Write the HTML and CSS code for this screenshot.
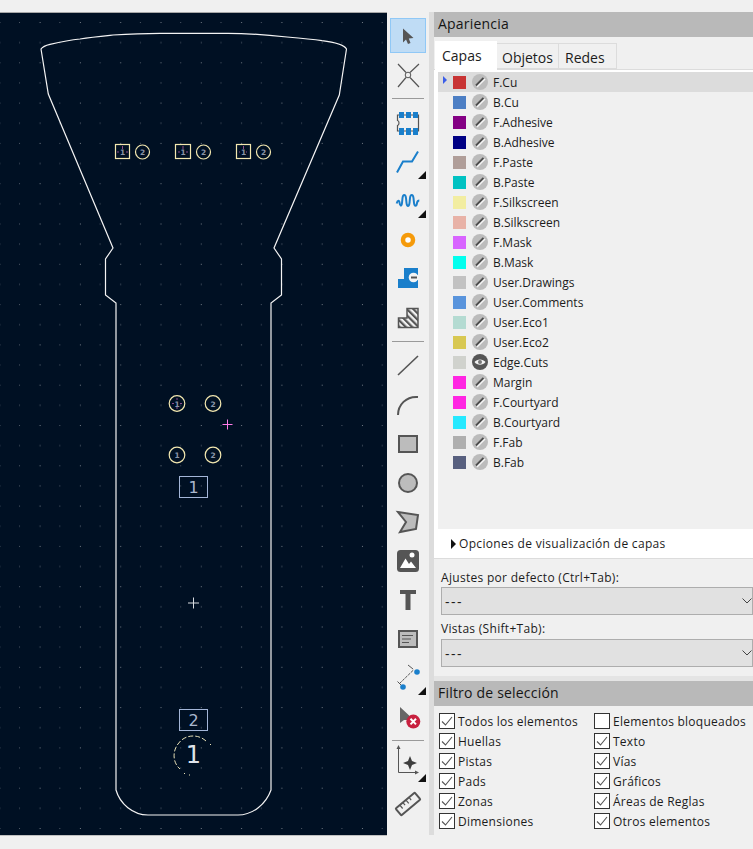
FILE: index.html
```html
<!DOCTYPE html>
<html lang="es">
<head>
<meta charset="utf-8">
<title>Apariencia</title>
<link rel="stylesheet" href="styles.css">
</head>
<body>
<svg class="defs" width="0" height="0">
  <symbol id="off" viewBox="0 0 16 16">
    <circle cx="8" cy="8" r="8" fill="#bcbcbc"/>
    <path d="M4 11.500 11.500 4" stroke="#4e4e4e" stroke-width="1.900"/>
    <path d="M5 13 13 5" stroke="#f4f4f4" stroke-width="1.400"/>
  </symbol>
  <symbol id="eye" viewBox="0 0 16 16">
    <circle cx="8" cy="8" r="8" fill="#555"/>
    <path d="M2.500 8C5 4.500 11 4.500 13.500 8 11 11.500 5 11.500 2.500 8Z" fill="#f2f2f2"/>
    <circle cx="8" cy="8" r="2" fill="#777"/>
  </symbol>
  <symbol id="tick" viewBox="0 0 14 14">
    <path d="M2 7.500 5.500 11 12 3" fill="none" stroke="#555" stroke-width="1.100"/>
  </symbol>
  <symbol id="chev" viewBox="0 0 10 6">
    <path d="M.5.5 5 5 9.500.5" fill="none" stroke="#444" stroke-width="1"/>
  </symbol>
  <pattern id="grid" x="19" y="22" width="40.300" height="40.300" patternUnits="userSpaceOnUse">
    <rect x="0" y="0" width="1" height="1" fill="#4d5765"/>
    <rect x="20.600" y="0" width="1" height="1" fill="#727a85"/>
    <rect x="0" y="20.100" width="1" height="1" fill="#4d5765"/>
    <rect x="20.600" y="20.100" width="1" height="1" fill="#5f6875"/>
  </pattern>
  <pattern id="hatch" width="4.500" height="4.500" patternUnits="userSpaceOnUse" patternTransform="rotate(-45)">
    <rect width="2.200" height="4.500" fill="#555"/>
  </pattern>
</svg>
<div class="top-strip"></div>
<div class="main">
  <div class="canvas">
    <svg class="board" viewBox="0 13 386 822" width="386" height="822">
      <rect x="0" y="13" width="386" height="822" fill="url(#grid)"/>
      <path class="edge" d="M41 49C43 46 47 45 50 44.300 60 42 70 40 80 39 92 37 103 36 113 35 128 34 145 33.300 160 33.300H228C248 33.300 268 35 287 37 299 38 311 39 322 40.700 333 42 344 45 346.500 49L339.300 95 274 248 281.500 259V295L271 303V790C266 804 253 815 238 815H148C133 815 120 804 116 790V303L105.500 295V259L113 248 48.300 94Z"/>
      <g class="pad">
        <rect x="115.500" y="144.500" width="14" height="14"/><circle cx="142.500" cy="152" r="7"/>
        <rect x="175.500" y="144.500" width="15" height="14"/><circle cx="203.500" cy="152" r="7"/>
        <rect x="236.500" y="144.500" width="14" height="14"/><circle cx="263.500" cy="152" r="7"/>
        <circle cx="177" cy="403.500" r="7.800"/><circle cx="213" cy="403.500" r="7.800"/>
        <circle cx="177" cy="455" r="7.800"/><circle cx="213" cy="455" r="7.800"/>
      </g>
      <path class="mark small" d="M117 152h2m7 0h2M122.500 146v3M178 152h2m6 0h2M183 146v3M239 152h1m6 0h1M243.500 146v3M172 403.500h2m6 0h2M177 398v2m0 7v2"/>
      <g class="padnum">
        <text x="122.500" y="155">1</text><text x="142.500" y="155">2</text>
        <text x="183" y="155">1</text><text x="203.500" y="155">2</text>
        <text x="243.500" y="155">1</text><text x="263.500" y="155">2</text>
        <text x="177" y="406.500">1</text><text x="213" y="406.500">2</text>
        <text x="177" y="458">1</text><text x="213" y="458">2</text>
      </g>
      <path class="mark" d="M222.500 424.500h10M227.500 419.500v10"/>
      <rect class="box" x="179.500" y="476.500" width="28" height="21"/>
      <rect class="box" x="179.500" y="709.500" width="28" height="21"/>
      <text class="ref" x="193.500" y="492.500">1</text>
      <text class="ref" x="193.500" y="725.500">2</text>
      <path class="cross" d="M188 603h11M193.500 597.500v11"/>
      <path class="dash" d="M206 741C197 733 184 735 178 744 172 752 173 763 180 769M184 773l1 1M189 775h1M210 744l1 1"/>
      <text class="value" x="193.500" y="763">1</text>
    </svg>
  </div>
  <div class="toolbar">
    <div class="tool active"><svg width="24" height="24" viewBox="0 0 24 24"><path d="M7 4.500 7 18.500 10 15.500 12 20 14.500 19 12.800 14.500 17.500 14Z" fill="#555"/></svg></div>
    <div class="tool"><svg width="24" height="24" viewBox="0 0 24 24"><path d="M2 1 10 9.500M23 1 14 9.500M2 24 10 14.500M23 24 14 14.500" stroke="#555" stroke-width="1.200" fill="none"/><circle cx="12" cy="12" r="2.800" fill="#eee" stroke="#555" stroke-width="1"/></svg></div>
    <div class="sep"></div>
    <div class="tool"><svg width="24" height="24" viewBox="0 0 24 24"><path d="M1.500 4H22.500V20H1.500V14.500C3.500 14 3.500 10 1.500 9.500Z" fill="none" stroke="#555" stroke-width="1.200"/><g fill="#1a7fcb"><rect x="3" y="1" width="5" height="6"/><rect x="10" y="1" width="5" height="6"/><rect x="17" y="1" width="5" height="6"/><rect x="3" y="17" width="5" height="7"/><rect x="10" y="17" width="5" height="7"/><rect x="17" y="17" width="5" height="7"/></g></svg></div>
    <div class="tool more"><svg width="24" height="24" viewBox="0 0 24 24"><path d="M1 22.600 7 11.600H16L22 1.600" fill="none" stroke="#1a7fcb" stroke-width="2"/></svg></div>
    <div class="tool more"><svg width="24" height="24" viewBox="0 0 24 24"><path d="M.7 14.500C1.500 11 3.300 11 3.600 14 3.900 17 5.500 18 6 14L6.500 9C7 5 9.500 5 10 9L10.500 14C11 18 13 18 13.500 14L14 9C14.500 5 17 5 17.500 9L18 14C18.500 18 20.500 17.500 21 14 21.300 12.500 22 11.500 23.300 11.500" fill="none" stroke="#1a7fcb" stroke-width="2"/></svg></div>
    <div class="tool"><svg width="24" height="24" viewBox="0 0 24 24"><circle cx="12" cy="12" r="5" fill="#fff" stroke="#f59a0a" stroke-width="4.500"/></svg></div>
    <div class="tool"><svg width="24" height="24" viewBox="0 0 24 24"><path d="M8 1H22V21H2V12H8Z" fill="#1a7fcb"/><circle cx="17.500" cy="10.500" r="4.800" fill="#f4f4f4"/><rect x="19" y="8" width="3" height="5" fill="#f4f4f4"/><path d="M15 10.500H21" stroke="#555" stroke-width="2"/></svg></div>
    <div class="tool"><svg width="24" height="24" viewBox="0 0 24 24"><path d="M11 2.500H22V21.500H2.500V12H11Z" fill="url(#hatch)" stroke="#555" stroke-width="1.500"/></svg></div>
    <div class="sep"></div>
    <div class="tool"><svg width="24" height="24" viewBox="0 0 24 24"><path d="M2 21 22 2" stroke="#555" stroke-width="1.600"/></svg></div>
    <div class="tool"><svg width="24" height="24" viewBox="0 0 24 24"><path d="M2 22C2 12 10 3 22 4" fill="none" stroke="#555" stroke-width="2"/></svg></div>
    <div class="tool"><svg width="24" height="24" viewBox="0 0 24 24"><rect x="3" y="4" width="18" height="16" fill="#bcbcbc" stroke="#555" stroke-width="2"/></svg></div>
    <div class="tool"><svg width="24" height="24" viewBox="0 0 24 24"><circle cx="12" cy="12" r="9" fill="#bcbcbc" stroke="#555" stroke-width="2"/></svg></div>
    <div class="tool"><svg width="24" height="24" viewBox="0 0 24 24"><path d="M2 2 22 5 20 19 4 22 10 12Z" fill="#bcbcbc" stroke="#555" stroke-width="2"/></svg></div>
    <div class="tool"><svg width="24" height="24" viewBox="0 0 24 24"><rect x="1" y="1" width="22" height="22" rx="3.500" fill="#555"/><circle cx="16" cy="6" r="2.500" fill="#fff"/><path d="M4 19 9.500 9.500 13 15 15 12.500 20 19Z" fill="#fff"/></svg></div>
    <div class="tool"><svg width="24" height="24" viewBox="0 0 24 24"><path d="M4 2H20V6H14.500V22H9.500V6H4Z" fill="#555"/></svg></div>
    <div class="tool"><svg width="24" height="24" viewBox="0 0 24 24"><rect x="3" y="4" width="18" height="16" fill="#bcbcbc" stroke="#555" stroke-width="2"/><path d="M6 8.500H17M6 12H15M6 15.500H13" stroke="#555" stroke-width="1.200"/></svg></div>
    <div class="tool more"><svg width="24" height="24" viewBox="0 0 24 24"><path d="M3.500 17.500 18 3.500" stroke="#555" stroke-width="1" stroke-dasharray="3 1"/><path d="M1.500 15.500 6 20M12 -1 17 3" stroke="#555" stroke-width="1"/><circle cx="21" cy="6" r="2.800" fill="#1a7fcb"/><circle cx="7" cy="21" r="2.800" fill="#1a7fcb"/></svg></div>
    <div class="tool"><svg width="24" height="24" viewBox="0 0 24 24"><path d="M4 2 4 18 8 15 18 15Z" fill="#666"/><circle cx="17.300" cy="16.600" r="7" fill="#c8203f"/><path d="M14.500 13.800 20 19.400M20 13.800 14.500 19.400" stroke="#fff" stroke-width="2"/></svg></div>
    <div class="sep"></div>
    <div class="tool more"><svg width="24" height="24" viewBox="0 0 24 24"><path d="M2.500 -7V19.500H22" fill="none" stroke="#555" stroke-width="1"/><path d="M2.500 -8 .5 -4H4.500ZM23 19.500 19 17.500V21.500Z" fill="#555"/><path d="M14 3 16 8 21 10 16 12 14 17 12 12 7 10 12 8Z" fill="#3d3d3d"/></svg></div>
    <div class="tool"><svg width="24" height="24" viewBox="0 0 24 24"><g transform="rotate(-40 12 12)"><rect x="-0.500" y="7.500" width="25" height="9" rx="1" fill="#f0f0f0" stroke="#555" stroke-width="2"/><path d="M5 8V12M9 8V11M13 8V12M17 8V11" stroke="#555" stroke-width="1.200"/></g></svg></div>
  </div>
  <div class="sash"></div>
  <div class="panel">
    <div class="header">Apariencia</div>
    <div class="tabs">
      <div class="tab current">Capas</div>
      <div class="tab">Objetos</div>
      <div class="tab">Redes</div>
    </div>
    <div class="layers">
      <div class="list">
        <div class="layer selected"><span class="marker"></span><span class="swatch c-fcu"></span><svg class="vis"><use href="#off"/></svg><span>F.Cu</span></div>
        <div class="layer"><span class="swatch c-bcu"></span><svg class="vis"><use href="#off"/></svg><span>B.Cu</span></div>
        <div class="layer"><span class="swatch c-fad"></span><svg class="vis"><use href="#off"/></svg><span>F.Adhesive</span></div>
        <div class="layer"><span class="swatch c-bad"></span><svg class="vis"><use href="#off"/></svg><span>B.Adhesive</span></div>
        <div class="layer"><span class="swatch c-fpa"></span><svg class="vis"><use href="#off"/></svg><span>F.Paste</span></div>
        <div class="layer"><span class="swatch c-bpa"></span><svg class="vis"><use href="#off"/></svg><span>B.Paste</span></div>
        <div class="layer"><span class="swatch c-fsi"></span><svg class="vis"><use href="#off"/></svg><span>F.Silkscreen</span></div>
        <div class="layer"><span class="swatch c-bsi"></span><svg class="vis"><use href="#off"/></svg><span>B.Silkscreen</span></div>
        <div class="layer"><span class="swatch c-fma"></span><svg class="vis"><use href="#off"/></svg><span>F.Mask</span></div>
        <div class="layer"><span class="swatch c-bma"></span><svg class="vis"><use href="#off"/></svg><span>B.Mask</span></div>
        <div class="layer"><span class="swatch c-dra"></span><svg class="vis"><use href="#off"/></svg><span>User.Drawings</span></div>
        <div class="layer"><span class="swatch c-com"></span><svg class="vis"><use href="#off"/></svg><span>User.Comments</span></div>
        <div class="layer"><span class="swatch c-ec1"></span><svg class="vis"><use href="#off"/></svg><span>User.Eco1</span></div>
        <div class="layer"><span class="swatch c-ec2"></span><svg class="vis"><use href="#off"/></svg><span>User.Eco2</span></div>
        <div class="layer"><span class="swatch c-edg"></span><svg class="vis"><use href="#eye"/></svg><span>Edge.Cuts</span></div>
        <div class="layer"><span class="swatch c-mar"></span><svg class="vis"><use href="#off"/></svg><span>Margin</span></div>
        <div class="layer"><span class="swatch c-mar"></span><svg class="vis"><use href="#off"/></svg><span>F.Courtyard</span></div>
        <div class="layer"><span class="swatch c-bco"></span><svg class="vis"><use href="#off"/></svg><span>B.Courtyard</span></div>
        <div class="layer"><span class="swatch c-ffa"></span><svg class="vis"><use href="#off"/></svg><span>F.Fab</span></div>
        <div class="layer"><span class="swatch c-bfa"></span><svg class="vis"><use href="#off"/></svg><span>B.Fab</span></div>
      </div>
    </div>
    <div class="options"><span class="arrow"></span><span>Opciones de visualización de capas</span></div>
    <div class="presets">
      <div class="label">Ajustes por defecto (Ctrl+Tab):</div>
      <div class="combo"><span class="value-text">---</span><svg class="chev"><use href="#chev"/></svg></div>
      <div class="label second">Vistas (Shift+Tab):</div>
      <div class="combo"><span class="value-text">---</span><svg class="chev"><use href="#chev"/></svg></div>
    </div>
    <div class="hsash"></div>
    <div class="header">Filtro de selección</div>
    <div class="filter">
      <div class="check"><span class="cb"><svg><use href="#tick"/></svg></span>Todos los elementos</div>
      <div class="check"><span class="cb"></span>Elementos bloqueados</div>
      <div class="check"><span class="cb"><svg><use href="#tick"/></svg></span>Huellas</div>
      <div class="check"><span class="cb"><svg><use href="#tick"/></svg></span>Texto</div>
      <div class="check"><span class="cb"><svg><use href="#tick"/></svg></span>Pistas</div>
      <div class="check"><span class="cb"><svg><use href="#tick"/></svg></span>Vías</div>
      <div class="check"><span class="cb"><svg><use href="#tick"/></svg></span>Pads</div>
      <div class="check"><span class="cb"><svg><use href="#tick"/></svg></span>Gráficos</div>
      <div class="check"><span class="cb"><svg><use href="#tick"/></svg></span>Zonas</div>
      <div class="check"><span class="cb"><svg><use href="#tick"/></svg></span>Áreas de Reglas</div>
      <div class="check"><span class="cb"><svg><use href="#tick"/></svg></span>Dimensiones</div>
      <div class="check"><span class="cb"><svg><use href="#tick"/></svg></span>Otros elementos</div>
    </div>
  </div>
</div>
</body>
</html>
```
FILE: styles.css
```css
* { box-sizing: border-box; }
html, body { margin: 0; height: 849px; overflow: hidden; }
body {
  background: #f0f0f0;
  color: #1c1c1c;
  font: 12px "Open Sans", "Noto Sans", sans-serif;
  display: flex;
  flex-direction: column;
}
.defs { position: absolute; }
.top-strip { height: 12px; flex: none; }
.main { display: flex; height: 823px; flex: none; }
.canvas {
  width: 387px;
  height: 824px;
  flex: none;
  background: #001023;
  border-top: 1px solid #a8a8a8;
  border-bottom: 1px solid #c0c0c0;
}
.board { display: block; }
.edge { fill: none; stroke: #f4f4f4; stroke-width: 1.2; }
.pad rect, .pad circle { fill: none; stroke: #f3e8b0; stroke-width: 1.2; }
.padnum text { fill: #8a95a8; font: bold 7.5px "DejaVu Sans", sans-serif; text-anchor: middle; }
.mark { fill: none; stroke: #ff7be8; stroke-width: 1; }
.mark.small { stroke-opacity: .55; }
.box { fill: none; stroke: #a4b6d8; stroke-width: 1; }
.ref { fill: #a9b7cd; font: 16px "DejaVu Sans", sans-serif; text-anchor: middle; }
.cross { fill: none; stroke: #d8dbe0; stroke-width: 1; }
.dash { fill: none; stroke: #e9e2b8; stroke-width: 1; stroke-dasharray: 5 2; }
.value { fill: #dfe3ea; font: 24px "DejaVu Sans", sans-serif; text-anchor: middle; }

.toolbar { width: 42px; flex: none; padding-top: 4px; }
.tool {
  position: relative;
  height: 39px;
  margin: 0 3px;
  display: flex;
  align-items: center;
  justify-content: center;
}
.tool svg { overflow: visible; display: block; }
.tool.active {
  height: 35px;
  margin: 2px 3px;
  background: #bfdcf5;
  border: 1px solid #90c8f6;
}
.tool.more::after {
  content: "";
  position: absolute;
  right: 0;
  bottom: 2px;
  border-style: solid;
  border-width: 0 0 8px 8px;
  border-color: transparent transparent #111 transparent;
}
.sep { height: 9px; padding-top: 4px; }
.sep::before {
  content: "";
  display: block;
  height: 1px;
  margin: 0 5px;
  background: #9a9a9a;
}
.sash { width: 5px; flex: none; background: #dcdcdc; height: 823px; }

.panel { width: 319px; flex: none; display: flex; flex-direction: column; }
.header {
  height: 25px;
  flex: none;
  padding-left: 4px;
  background: #b9b9b9;
  font-size: 14px;
  letter-spacing: .2px;
  line-height: 24px;
  color: #151515;
}
.tabs { height: 33px; flex: none; display: flex; align-items: flex-end; padding-left: 1px; border-bottom: 1px solid #dcdcdc; }
.tab {
  height: 26px;
  padding: 0 5px;
  border: 1px solid #dcdcdc;
  border-left: 0;
  font-size: 14px;
  line-height: 27px;
  width: 62px;
}
.tab:last-child { width: 58px; padding-left: 6px; }
.tab.current {
  height: 29px;
  margin-bottom: -1px;
  background: #fff;
  border: 0;
  padding-left: 7px;
  line-height: 29px;
}
.layers { height: 459px; flex: none; background: #fff; padding: 2px 0 0 4px; }
.list { height: 100%; background: #f0f0f0; }
.layer { position: relative; height: 20px; display: flex; align-items: center; padding-left: 15px; }
.layer.selected { background: #dcdcdc; }
.marker {
  position: absolute;
  left: 5px;
  top: 4px;
  border-style: solid;
  border-width: 4px 0 4px 4px;
  border-color: transparent transparent transparent #3b5ee8;
}
.swatch { width: 13px; height: 13px; flex: none; }
.vis { width: 16px; height: 16px; flex: none; margin: 0 5px 0 6px; }
.c-fcu { background: #c83434; }
.c-bcu { background: #4d7fc4; }
.c-fad { background: #840084; }
.c-bad { background: #000084; }
.c-fpa { background: #b09e99; }
.c-bpa { background: #00c2c2; }
.c-fsi { background: #f2eda1; }
.c-bsi { background: #e8b2a7; }
.c-fma { background: #d864ff; }
.c-bma { background: #02ffee; }
.c-dra { background: #c2c2c2; }
.c-com { background: #5994dc; }
.c-ec1 { background: #b4dbd2; }
.c-ec2 { background: #d8c852; }
.c-edg { background: #d0d2cd; }
.c-mar { background: #ff26e2; }
.c-bco { background: #26e9ff; }
.c-ffa { background: #afafaf; }
.c-bfa { background: #58607f; }
.options {
  height: 30px;
  flex: none;
  background: #fff;
  border-bottom: 1px solid #dcdcdc;
  display: flex;
  align-items: center;
  padding-left: 17px;
  gap: 3px;
  letter-spacing: .32px;
}
.arrow {
  border-style: solid;
  border-width: 5px 0 5px 5px;
  border-color: transparent transparent transparent #111;
}
.presets { height: 117px; flex: none; padding: 10px 0 0 7px; letter-spacing: .3px; }
.label { height: 18px; line-height: 18px; }
.label.second { margin-top: 5px; height: 19px; }
.combo {
  height: 28px;
  background: #e1e1e1;
  border: 1px solid #adadad;
  display: flex;
  align-items: center;
  justify-content: space-between;
  padding: 0 0 0 3px;
}
.value-text { font-size: 14px; letter-spacing: 1.500px; }
.chev { width: 10px; height: 6px; }
.hsash { height: 5px; flex: none; background: #e4e4e4; }
.filter {
  display: grid;
  grid-template-columns: 155px 1fr;
  grid-auto-rows: 20px;
  padding: 5px 0 0 5px;
  letter-spacing: .25px;
}
.check { display: flex; align-items: center; gap: 3px; white-space: nowrap; }
.cb { width: 16px; height: 16px; border: 1px solid #333; background: #fff; flex: none; display: block; }
.cb svg { display: block; width: 14px; height: 14px; }
```
